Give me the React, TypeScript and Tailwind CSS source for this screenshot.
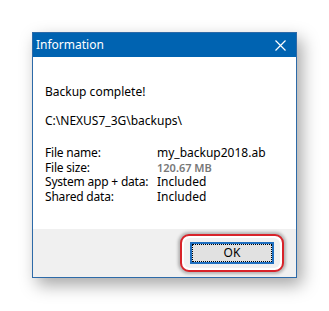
const rows = [
  { label: 'File name:', value: 'my_backup2018.ab', muted: false },
  { label: 'File size:', value: '120.67 MB', muted: true },
  { label: 'System app + data:', value: 'Included', muted: false },
  { label: 'Shared data:', value: 'Included', muted: false },
];

const App = () => {
  return (
    <div className="h-[311px] w-[329px] bg-white pl-[32px] pt-[32px] font-['Noto_Sans',sans-serif] text-[12px] text-black">
      <div className="flex h-[246px] w-[265px] flex-col border border-[#2d6aa8] bg-white shadow-[5px_7px_16px_rgba(0,0,0,0.35)]">
        <div className="flex h-[24px] items-center justify-between bg-[#0063b1] pl-[3px] pr-[10px] text-white">
          <span className="text-[12px]">Information</span>
          <svg width="11" height="11" viewBox="0 0 11 11" fill="none" stroke="white" strokeWidth="1.2">
            <path d="M0.5 0.5 L10.5 10.5 M10.5 0.5 L0.5 10.5" />
          </svg>
        </div>

        <div className="flex flex-1 flex-col pl-[12px] pt-[27px] leading-[15px]">
          <p>Backup complete!</p>
          <p className="mt-[14px]">C:\NEXUS7_3G\backups\</p>
          <div className="mt-[18px] flex flex-col">
            {rows.map((row) => (
              <div key={row.label} className="flex h-[14.7px] items-center leading-[14.7px]">
                <span className="w-[112px] tracking-[-0.2px]">{row.label}</span>
                {row.muted ? (
                  <span className="text-[11px] font-semibold text-[#777]">{row.value}</span>
                ) : (
                  <span>{row.value}</span>
                )}
              </div>
            ))}
          </div>
        </div>

        <div className="flex h-[48px] items-start justify-end bg-[#f0f0f0] pr-[12px] pt-[5px]">
          <div className="rounded-[9px] border-2 border-[#d8232a] bg-white p-[2px] shadow-[0_0_3px_2px_rgba(0,0,0,0.25)]">
            <div className="rounded-[6px] bg-[#f0f0f0] px-[6px] py-[4px]">
              <button className="flex h-[22px] w-[84px] items-center justify-center border-2 border-[#1f6fc0] bg-[#e1e1e1]">
                <span className="flex h-full w-full items-center justify-center border border-dotted border-black">
                  OK
                </span>
              </button>
            </div>
          </div>
        </div>
      </div>
    </div>
  );
};

export default App;
